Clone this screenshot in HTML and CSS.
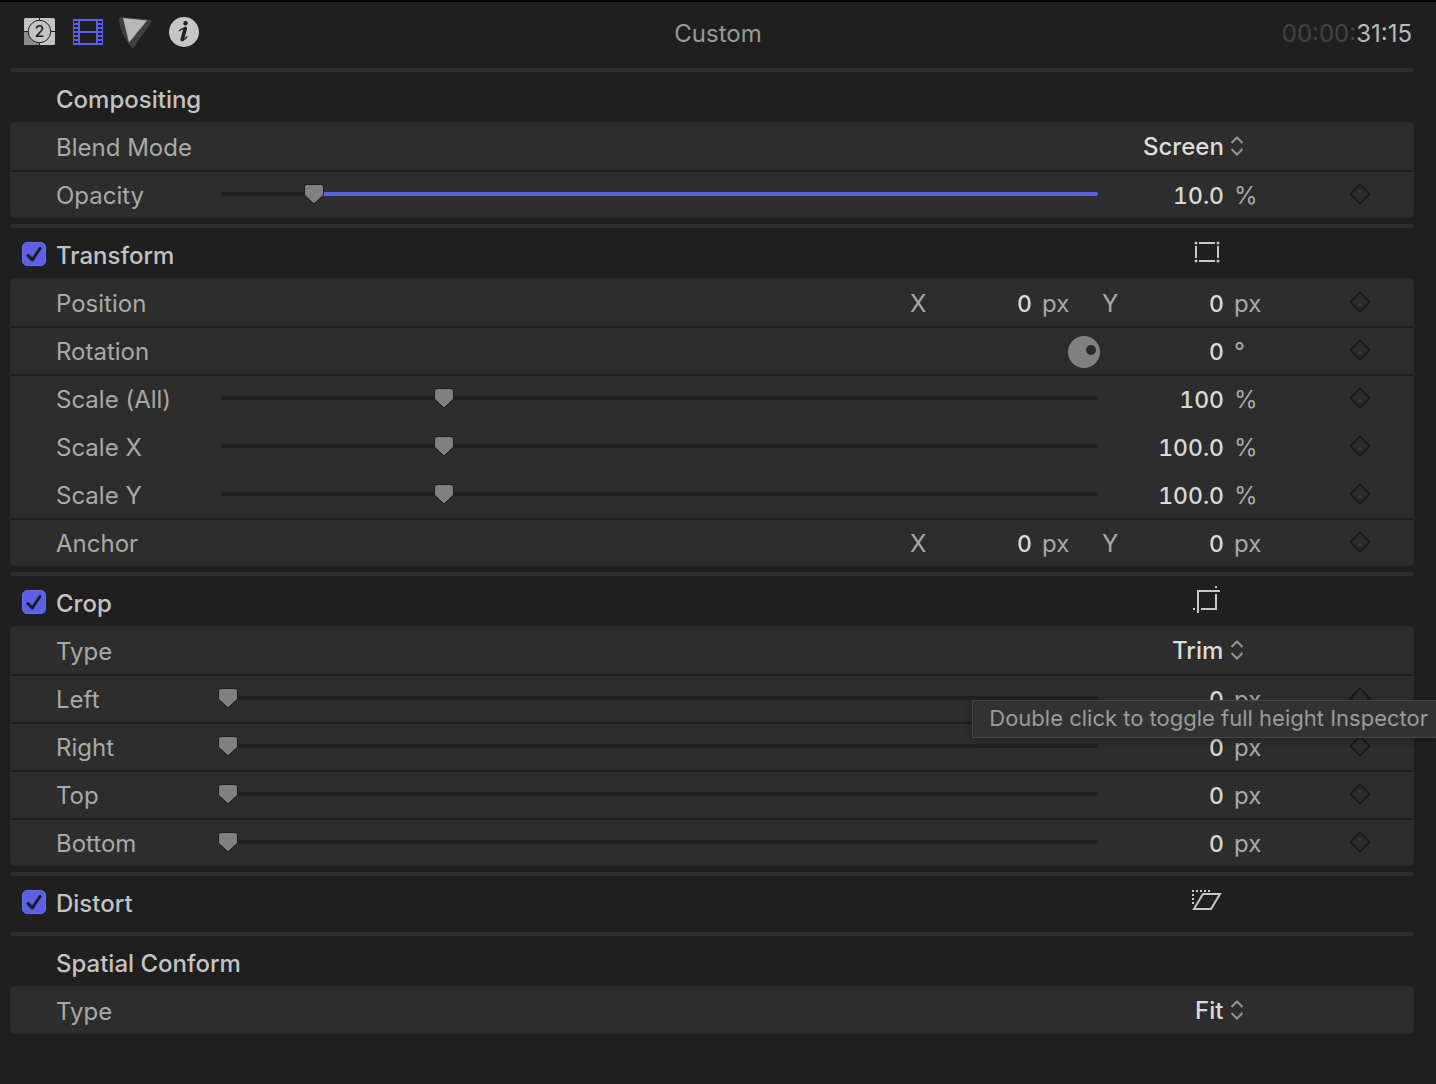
FILE: index.html
```html
<!DOCTYPE html>
<html lang="en">
<head>
<meta charset="utf-8">
<title>Video Inspector</title>
<link rel="stylesheet" href="styles.css">
</head>
<body>
<svg class="sprites" width="0" height="0" aria-hidden="true">
  <symbol id="diamond" viewBox="0 0 24 24"><path d="M12 2.500 21.500 12 12 21.500 2.500 12Z" fill="none" stroke="currentColor" stroke-width="2"/></symbol>
</svg>
<header class="topbar">
  <nav class="tabs" aria-label="Inspector tabs">
    <button class="tab" aria-label="Titles">
      <svg width="32" height="32" viewBox="0 0 32 32"><rect y="2" width="31" height="27" rx="1.500" fill="#c4c4c4"/><path d="M0 15.500H15.500V29H1.500Q0 29 0 27.500Z" fill="#8c8c8c"/><path d="M0 15.500H31M15.500 2V29" stroke="#1f1f1f" stroke-width="1"/><circle cx="15.500" cy="15.500" r="11.200" fill="#c4c4c4" stroke="#1f1f1f" stroke-width="1"/><text class="leader-digit" x="15.500" y="21" text-anchor="middle">2</text></svg>
    </button>
    <button class="tab" aria-label="Video" aria-pressed="true">
      <svg width="32" height="32" viewBox="0 0 32 32"><path fill="#5b60e6" fill-rule="evenodd" d="M1 3H31V29H1ZM8 5V15H24V5ZM8 17V27H24V17ZM2 5V7H6V5ZM2 9V11H6V9ZM2 13V15H6V13ZM2 17V19H6V17ZM2 21V23H6V21ZM2 25V27H6V25ZM26 5V7H30V5ZM26 9V11H30V9ZM26 13V15H30V13ZM26 17V19H30V17ZM26 21V23H30V21ZM26 25V27H30V25Z"/></svg>
    </button>
    <button class="tab" aria-label="Color">
      <svg width="36" height="36" viewBox="1 0 36 36"><path d="M0 5Q0 3 3 3L30 5.500Q34 6 32 9L14 34.500Q6 27 2 15Q0 9 0 5Z" fill="#404040"/><path d="M4 4 28 6.500 10 28.500Z" fill="#b8b8b8"/></svg>
    </button>
    <button class="tab" aria-label="Info">
      <svg width="32" height="32" viewBox="0 0 32 32"><circle cx="16" cy="16" r="15" fill="#c6c6c6"/><circle cx="17.500" cy="7.200" r="2.200" fill="#1f1f1f"/><path d="M11.500 14.500Q14 12.500 17.500 12L15 22Q14.600 24 15.800 23.600Q17.300 23 18.800 20.800" fill="none" stroke="#1f1f1f" stroke-width="1.400" stroke-linecap="round" stroke-linejoin="round"/><path d="M17.300 12.500 14.200 23.500" stroke="#1f1f1f" stroke-width="3.600" stroke-linecap="round"/></svg>
    </button>
  </nav>
  <h1 class="title">Custom</h1>
  <time class="timecode"><span class="timecode-dim">00:00:</span>31:15</time>
</header>

<main class="inspector">
  <section class="group">
    <div class="group-head"><h2 class="group-name">Compositing</h2></div>
    <div class="panel">
      <div class="row"><label class="name" for="blend">Blend Mode</label>
        <select class="popup" id="blend"><option>Screen</option></select></div>
      <div class="row"><label class="name" for="opacity">Opacity</label>
        <input class="slider opacity" type="range" min="0" max="100" value="10" aria-label="Opacity slider">
        <input class="value" id="opacity" type="text" value="10.0"><span class="unit">%</span>
        <button class="key" aria-label="Add keyframe"><svg><use href="#diamond"/></svg></button></div>
    </div>
  </section>

  <section class="group">
    <div class="group-head"><input class="check" type="checkbox" id="transform" checked><label class="group-name" for="transform">Transform</label>
      <button class="tool" aria-label="Transform controls"><svg width="34" height="34" viewBox="0 0 34 34" stroke="#c8c8c8" stroke-width="2" fill="none"><path d="M9 7H25M9 25H25M6 10V22M28 10V22"/><g fill="#c8c8c8" stroke="none"><circle cx="6" cy="7" r="1.500"/><circle cx="28" cy="7" r="1.500"/><circle cx="6" cy="25" r="1.500"/><circle cx="28" cy="25" r="1.500"/></g></svg></button></div>
    <div class="panel">
      <div class="row"><span class="name">Position</span>
        <div class="pair"><label class="axis" for="pos-x">X</label><input class="value" id="pos-x" type="text" value="0"><span class="unit">px</span></div>
        <div class="cell"><label class="axis" for="pos-y">Y</label><input class="value" id="pos-y" type="text" value="0"></div><span class="unit">px</span>
        <button class="key" aria-label="Add keyframe"><svg><use href="#diamond"/></svg></button></div>
      <div class="row"><label class="name" for="rotation">Rotation</label>
        <button class="dial" aria-label="Rotation dial"><svg width="32" height="32" viewBox="0 0 32 32"><circle cx="16" cy="16" r="16" fill="#808080"/><circle cx="23" cy="14" r="5" fill="#2a2a2a"/></svg></button>
        <input class="value" id="rotation" type="text" value="0"><span class="unit">°</span>
        <button class="key" aria-label="Add keyframe"><svg><use href="#diamond"/></svg></button></div>
      <div class="row"><label class="name" for="scale">Scale (All)</label>
        <input class="slider" type="range" min="0" max="400" value="100" aria-label="Scale slider">
        <input class="value" id="scale" type="text" value="100"><span class="unit">%</span>
        <button class="key" aria-label="Add keyframe"><svg><use href="#diamond"/></svg></button></div>
      <div class="row joined"><label class="name" for="scale-x">Scale X</label>
        <input class="slider" type="range" min="0" max="400" value="100" aria-label="Scale X slider">
        <input class="value" id="scale-x" type="text" value="100.0"><span class="unit">%</span>
        <button class="key" aria-label="Add keyframe"><svg><use href="#diamond"/></svg></button></div>
      <div class="row joined"><label class="name" for="scale-y">Scale Y</label>
        <input class="slider" type="range" min="0" max="400" value="100" aria-label="Scale Y slider">
        <input class="value" id="scale-y" type="text" value="100.0"><span class="unit">%</span>
        <button class="key" aria-label="Add keyframe"><svg><use href="#diamond"/></svg></button></div>
      <div class="row"><span class="name">Anchor</span>
        <div class="pair"><label class="axis" for="anchor-x">X</label><input class="value" id="anchor-x" type="text" value="0"><span class="unit">px</span></div>
        <div class="cell"><label class="axis" for="anchor-y">Y</label><input class="value" id="anchor-y" type="text" value="0"></div><span class="unit">px</span>
        <button class="key" aria-label="Add keyframe"><svg><use href="#diamond"/></svg></button></div>
    </div>
  </section>

  <section class="group">
    <div class="group-head"><input class="check" type="checkbox" id="crop" checked><label class="group-name" for="crop">Crop</label>
      <button class="tool" aria-label="Crop controls"><svg width="34" height="34" viewBox="0 0 34 34" stroke="#c8c8c8" stroke-width="2" fill="none"><path d="M8 29V7H30M26 10V25H11M25 3H27M3 25H5"/></svg></button></div>
    <div class="panel">
      <div class="row"><label class="name" for="crop-type">Type</label>
        <select class="popup" id="crop-type"><option>Trim</option></select></div>
      <div class="row"><label class="name" for="left">Left</label>
        <input class="slider" type="range" min="0" max="1000" value="0" aria-label="Left slider">
        <input class="value" id="left" type="text" value="0"><span class="unit">px</span>
        <button class="key" aria-label="Add keyframe"><svg><use href="#diamond"/></svg></button>
        <div class="tooltip" role="tooltip">Double click to toggle full height Inspector</div></div>
      <div class="row"><label class="name" for="right">Right</label>
        <input class="slider" type="range" min="0" max="1000" value="0" aria-label="Right slider">
        <input class="value" id="right" type="text" value="0"><span class="unit">px</span>
        <button class="key" aria-label="Add keyframe"><svg><use href="#diamond"/></svg></button></div>
      <div class="row"><label class="name" for="top">Top</label>
        <input class="slider" type="range" min="0" max="1000" value="0" aria-label="Top slider">
        <input class="value" id="top" type="text" value="0"><span class="unit">px</span>
        <button class="key" aria-label="Add keyframe"><svg><use href="#diamond"/></svg></button></div>
      <div class="row"><label class="name" for="bottom">Bottom</label>
        <input class="slider" type="range" min="0" max="1000" value="0" aria-label="Bottom slider">
        <input class="value" id="bottom" type="text" value="0"><span class="unit">px</span>
        <button class="key" aria-label="Add keyframe"><svg><use href="#diamond"/></svg></button></div>
    </div>
  </section>

  <section class="group">
    <div class="group-head"><input class="check" type="checkbox" id="distort" checked><label class="group-name" for="distort">Distort</label>
      <button class="tool" aria-label="Distort controls"><svg width="34" height="34" viewBox="0 0 34 34" stroke="#c8c8c8" stroke-width="2" fill="none"><path d="M13 10H30L21 25H4Z"/><path d="M2 7H20M3 10V20" stroke-dasharray="2 2"/></svg></button></div>
  </section>

  <section class="group">
    <div class="group-head"><h2 class="group-name">Spatial Conform</h2></div>
    <div class="panel">
      <div class="row"><label class="name" for="conform">Type</label>
        <select class="popup" id="conform"><option>Fit</option></select></div>
    </div>
  </section>
</main>
</body>
</html>
```
FILE: styles.css
```css
* { box-sizing: border-box; }

body {
  margin: 0;
  min-height: 100vh;
  border-top: 2px solid #000;
  background: #1f1f1f;
  color: #a9a9a9;
  font: 400 24px/30px Inter, "Liberation Sans", sans-serif;
  overflow-x: hidden;
}

button, input, select {
  margin: 0;
  padding: 0;
  border: 0;
  background: none;
  color: inherit;
  font: inherit;
}

svg { display: block; }
.sprites { position: absolute; }

.topbar {
  display: grid;
  grid-template-columns: 1fr auto 1fr;
  align-items: center;
  height: 66px;
  padding: 0 24px 6px;
}
.tabs { display: flex; align-items: center; gap: 16px; }
.tab:nth-child(3) { margin-right: -4px; }
.tab svg { overflow: visible; }
.leader-digit { font: 500 16px Inter, sans-serif; fill: #1f1f1f; }
.title { margin: 0; padding-top: 4px; font-size: 24px; font-weight: 400; color: #999; }
.timecode { justify-self: end; padding-top: 4px; color: #b9b9b9; }
.timecode-dim { color: #434343; }

.inspector { padding: 0 22px 0 10px; }
.group { border-top: 4px solid #2d2d2d; padding-bottom: 6px; }

.group-head, .row {
  display: grid;
  grid-template-columns: 46px 165px 1fr 126px 82px 108px;
  align-items: center;
}
.group-head { height: 50px; }
.group-name {
  grid-column: 2 / 4;
  grid-row: 1;
  margin: 0;
  padding-top: 6px;
  font-size: 24px;
  font-weight: 500;
  color: #c3c3c3;
}
.tool { grid-column: 4; grid-row: 1; justify-self: end; }

.check {
  appearance: none;
  grid-column: 1;
  justify-self: end;
  width: 24px;
  height: 24px;
  margin: 2px 10px 0 0;
  border: 1px solid #686df0;
  border-radius: 5px;
  background: #5a5fe4 url("data:image/svg+xml,%3Csvg xmlns='http://www.w3.org/2000/svg' viewBox='0 0 22 22'%3E%3Cpath d='M5 12.500 9.300 17 17 5.500' fill='none' stroke='%231b1b1f' stroke-width='3' stroke-linecap='round' stroke-linejoin='round'/%3E%3C/svg%3E") center / 22px 22px no-repeat;
}

.panel { border-radius: 6px; background: #2d2d2d; }
.row { position: relative; height: 48px; }
.row + .row { box-shadow: inset 0 2px #1f1f1f; }
.row + .joined { box-shadow: none; }
.name { grid-column: 2; padding-top: 4px; }

.value {
  width: 100%;
  min-width: 0;
  height: 32px;
  padding-top: 4px;
  text-align: right;
  font-size: 23px;
  font-weight: 500;
  font-variant-numeric: tabular-nums;
  color: #d8d8d8;
}
.unit { padding: 4px 0 0 10px; }
.cell { display: flex; align-items: center; padding-left: 4px; }
.axis { padding-top: 4px; }
.pair {
  display: grid;
  grid-template-columns: 22px 100px 66px;
  align-items: center;
  justify-content: end;
}

.key { grid-column: 6; justify-self: center; color: #1b1b1b; }
.key svg { width: 24px; height: 24px; }
.dial { justify-self: end; margin: 4px -2px 0 0; }

.popup {
  appearance: none;
  grid-column: 3 / 6;
  justify-self: end;
  height: 32px;
  margin-right: 62px;
  padding: 2px 20px 0 0;
  font-weight: 500;
  color: #dcdcdc;
  background: url("data:image/svg+xml,%3Csvg xmlns='http://www.w3.org/2000/svg' viewBox='0 0 14 20'%3E%3Cpath d='M1.500 7 7 1.500 12.500 7M1.500 13 7 18.500 12.500 13' fill='none' stroke='%23959595' stroke-width='2'/%3E%3C/svg%3E") right 6px / 14px 20px no-repeat;
}

.slider {
  appearance: none;
  width: 100%;
  height: 4px;
  border-radius: 2px;
  background: #212121;
}
.opacity { background: linear-gradient(90deg, #212121 11%, #5a5fe4 11%); }
.slider::-webkit-slider-runnable-track { margin: 0 -3px; }
.slider::-webkit-slider-thumb {
  appearance: none;
  width: 20px;
  height: 20px;
  background: url("data:image/svg+xml,%3Csvg xmlns='http://www.w3.org/2000/svg' viewBox='0 0 20 20'%3E%3Cpath d='M3 .5H17Q19.500 .5 19.500 3V11L11 19Q10 20 9 19L.5 11V3Q.5 .5 3 .5Z' fill='%23808080' stroke='%231c1c1c'/%3E%3C/svg%3E") center / 20px 20px no-repeat;
}

.tooltip {
  position: absolute;
  z-index: 1;
  top: 26px;
  right: -22px;
  height: 38px;
  padding: 2px 8px 0 16px;
  border: 1px solid #464646;
  border-right: 0;
  background: #323232;
  box-shadow: 0 2px 8px #0004;
  color: #9b9b9b;
  font-size: 22px;
  white-space: nowrap;
}
```
